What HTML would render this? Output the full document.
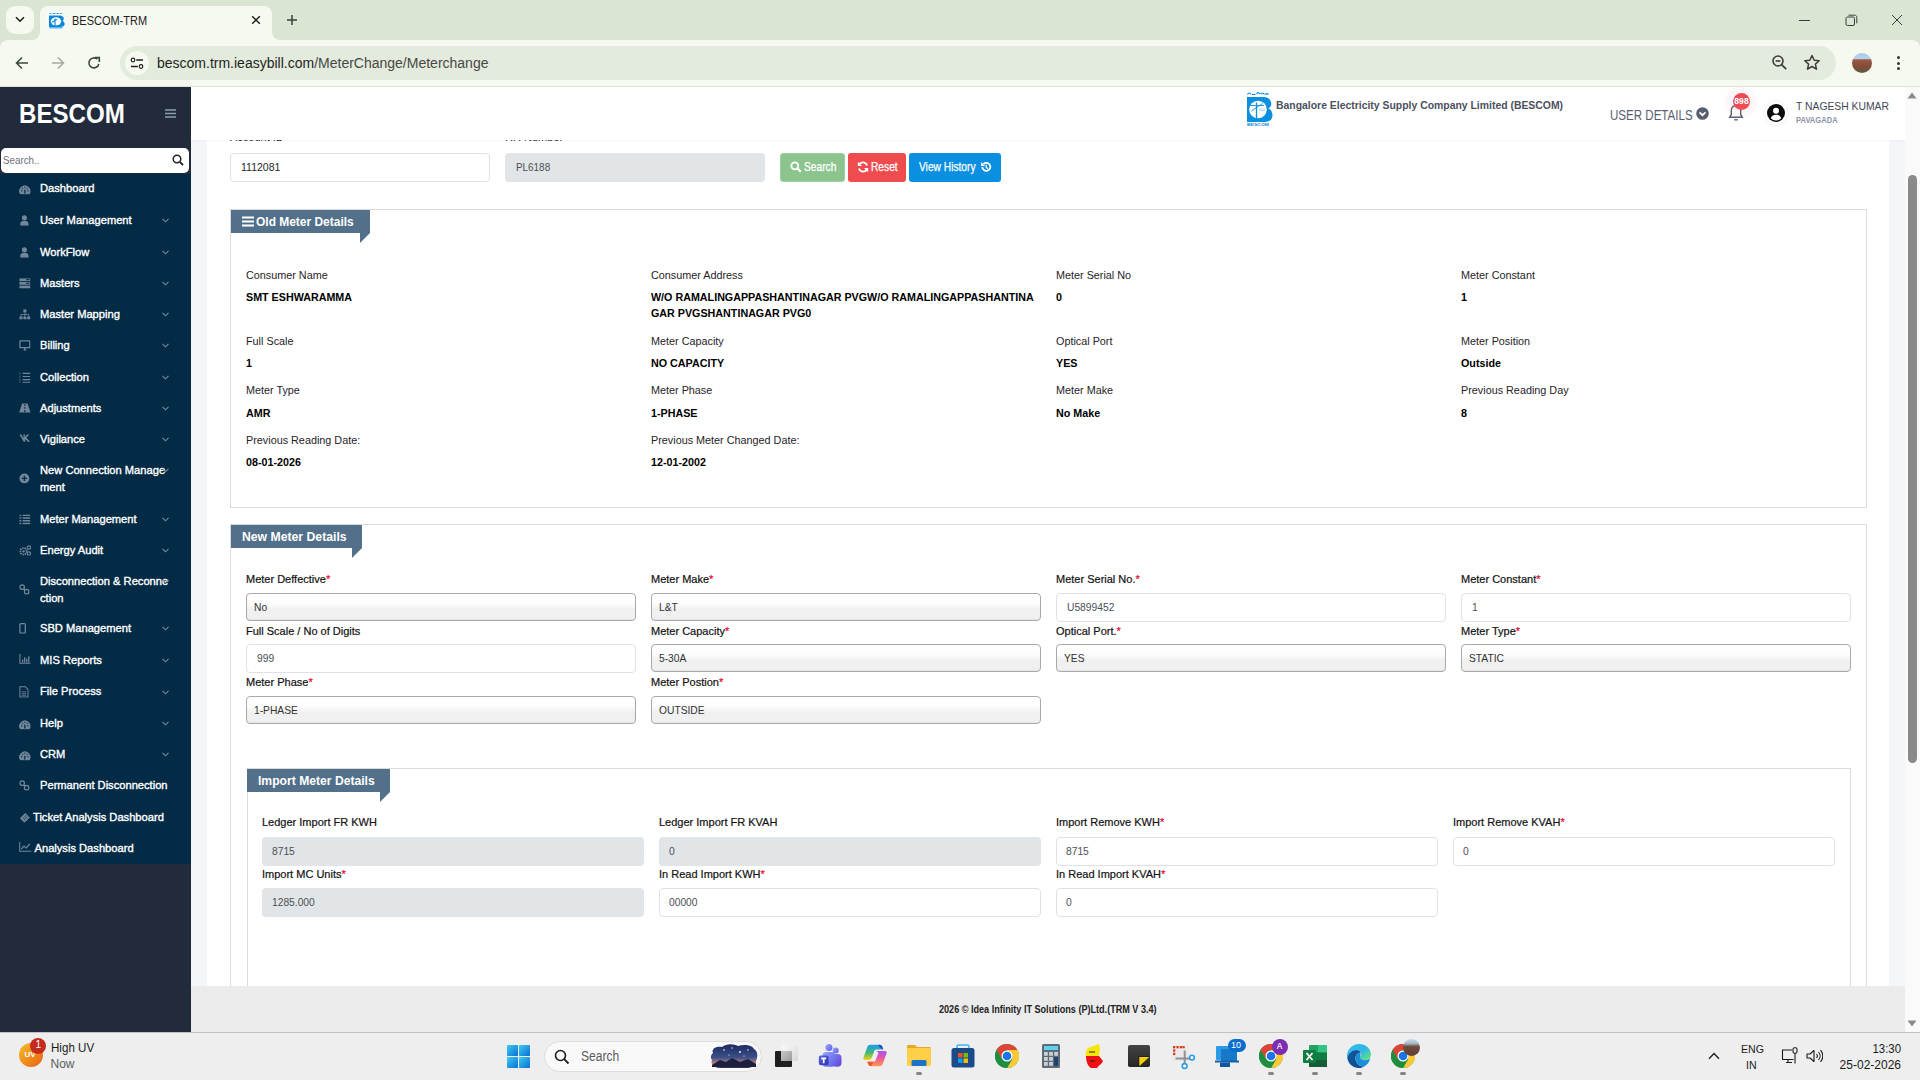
<!DOCTYPE html>
<html><head><meta charset="utf-8"><title>BESCOM-TRM</title>
<style>
*{box-sizing:border-box;margin:0;padding:0}
html,body{width:1920px;height:1080px;overflow:hidden;background:#fff;font-family:"Liberation Sans",sans-serif;position:relative}
.a{position:absolute}
.t{position:absolute;white-space:nowrap;line-height:1}
/* chrome */
#tabbar{left:0;top:0;width:1920px;height:40px;background:#dbe5d3}
#toolbar{left:0;top:40px;width:1920px;height:47px;background:#f6f9ef;border-bottom:1px solid #dce3d6}
/* sidebar */
#side{left:0;top:87px;width:191px;height:945px;background:#222b3b}
#menu{left:0;top:174px;width:191px;height:690px;background:#032b46}
.mi{position:absolute;left:40px;color:#fff;font-size:11.15px;line-height:17px;white-space:nowrap;-webkit-text-stroke:.35px #fff}
.ic{position:absolute;left:19px;width:12px;height:12px}
.chev{position:absolute;left:162px;width:7px;height:5px}
/* header */
#hdr{left:191px;top:87px;width:1714px;height:53px;background:#fff;box-shadow:0 1px 2px rgba(0,0,0,.04)}
/* content */
#bg{left:191px;top:140px;width:1714px;height:846px;background:#f5f6f9}
#card{left:207px;top:140px;width:1682px;height:846px;background:#fff}
#footer{left:191px;top:986px;width:1714px;height:46px;background:#ebebeb}
#sb{left:1905px;top:87px;width:15px;height:945px;background:#fafafa}
/* taskbar */
.sel{border:1px solid #a9a9a9;border-radius:4px;background:linear-gradient(#ffffff 0%,#fdfdfd 35%,#f0f0f0 60%,#f0f0f0 100%);box-shadow:inset 0 -1px 1px rgba(0,0,0,.04)}
#task{left:0;top:1032px;width:1920px;height:48px;background:#eeeeee;border-top:1px solid #c1c1c1}
</style></head><body>
<div id="tabbar" class="a"></div>
<div id="toolbar" class="a"></div>

<!-- tab bar -->
<div class="a" style="left:40px;top:6px;width:232px;height:35px;background:#f6f9ef;border-radius:8px 8px 0 0"></div>
<div class="a" style="left:264px;top:32px;width:16px;height:8px;background:#f6f9ef"></div>
<div class="a" style="left:272px;top:24px;width:16px;height:16px;background:#dbe5d3;border-radius:0 0 0 8px"></div>
<div class="a" style="left:32px;top:32px;width:8px;height:8px;background:#f6f9ef"></div>
<div class="a" style="left:24px;top:24px;width:16px;height:16px;background:#dbe5d3;border-radius:0 0 8px 0"></div>
<div class="a" style="left:6px;top:6px;width:28px;height:28px;background:#f6f9ef;border-radius:9px"></div>
<svg class="a" style="left:15px;top:16px" width="10" height="7" viewBox="0 0 10 7"><path d="M1 1.2 L5 5.2 L9 1.2" stroke="#1f1f1f" stroke-width="1.6" fill="none"/></svg>
<svg class="a" style="left:47px;top:11px" width="18" height="18" viewBox="0 0 18 18"><rect x=".5" y=".5" width="17" height="17.5" fill="#fff" opacity=".6"/><path d="M2.5 2.5h2M5.5 2.5h3M9.5 2.5h2.5M13 2.5h2" stroke="#3aa0e4" stroke-width="1.2"/><path d="M2 4.5H12.5C15.5 4.5 16.8 6 16.8 7.6C16.8 8.6 16.3 9.5 15.6 9.9C17 10.6 17.7 11.8 17.7 13C17.7 15 16 16 13 16H2Z" fill="#0a86dc"/><ellipse cx="9" cy="10.3" rx="5.2" ry="4" fill="#fff"/><path d="M8 7.5V14.5M5 11.2L10 8.3" stroke="#0a86dc" stroke-width="1.1"/><path d="M2.5 16.8h13" stroke="#4aa8e8" stroke-width="1.3"/></svg>
<div class="t" style="left:72px;top:14px;font-size:13px;color:#1f1f1f;transform:scaleX(.845);transform-origin:0 0">BESCOM-TRM</div>
<svg class="a" style="left:251px;top:15px" width="10" height="10" viewBox="0 0 10 10"><path d="M1.2 1.2L8.8 8.8M8.8 1.2L1.2 8.8" stroke="#1f1f1f" stroke-width="1.5"/></svg>
<svg class="a" style="left:286px;top:14px" width="12" height="12" viewBox="0 0 12 12"><path d="M6 1V11M1 6H11" stroke="#3c3f3a" stroke-width="1.5"/></svg>
<!-- window controls -->
<svg class="a" style="left:1799px;top:19px" width="12" height="3" viewBox="0 0 12 3"><path d="M0 1.5H11" stroke="#3d3d3d" stroke-width="1"/></svg>
<svg class="a" style="left:1845px;top:14px" width="13" height="13" viewBox="0 0 13 13"><rect x="1" y="3" width="8.5" height="8.5" rx="1.5" stroke="#3d3d3d" fill="none" stroke-width="1"/><path d="M3.5 1.2H9.5c1.5 0 2.3 .8 2.3 2.3V9.3" stroke="#3d3d3d" fill="none" stroke-width="1"/></svg>
<svg class="a" style="left:1891px;top:14px" width="12" height="12" viewBox="0 0 12 12"><path d="M1 1L11 11M11 1L1 11" stroke="#3d3d3d" stroke-width="1"/></svg>
<!-- toolbar -->
<div class="a" style="left:0;top:40px;width:8px;height:8px;background:#dbe5d3"></div>
<div class="a" style="left:0;top:40px;width:16px;height:16px;background:#f6f9ef;border-radius:8px 0 0 0"></div>
<div class="a" style="left:1912px;top:40px;width:8px;height:8px;background:#dbe5d3"></div>
<div class="a" style="left:1904px;top:40px;width:16px;height:16px;background:#f6f9ef;border-radius:0 8px 0 0"></div>
<svg class="a" style="left:15px;top:56px" width="14" height="14" viewBox="0 0 14 14"><path d="M13 7H2M7 1.5L1.5 7L7 12.5" stroke="#3a4a3a" stroke-width="1.6" fill="none"/></svg>
<svg class="a" style="left:51px;top:56px" width="14" height="14" viewBox="0 0 14 14"><path d="M1 7H12M7 1.5L12.5 7L7 12.5" stroke="#a4aaa2" stroke-width="1.6" fill="none"/></svg>
<svg class="a" style="left:87px;top:56px" width="14" height="14" viewBox="0 0 14 14"><path d="M11.8 8A5 5 0 1 1 10.3 3.2" stroke="#3a4a3a" stroke-width="1.6" fill="none"/><path d="M8 1.6H12.3V5.9" stroke="#3a4a3a" stroke-width="1.6" fill="none"/></svg>
<div class="a" style="left:120px;top:46px;width:1716px;height:34px;background:#e3ebdd;border-radius:17px"></div>
<div class="a" style="left:125px;top:51px;width:24px;height:24px;background:#f6f9ef;border-radius:12px"></div>
<svg class="a" style="left:130px;top:57px" width="14" height="13" viewBox="0 0 14 13"><circle cx="3" cy="3" r="1.8" stroke="#1f1f1f" stroke-width="1.2" fill="none"/><path d="M6.2 3H13M1 9.5H7.8" stroke="#1f1f1f" stroke-width="1.4"/><circle cx="11" cy="9.5" r="1.8" stroke="#1f1f1f" stroke-width="1.2" fill="none"/></svg>
<div class="t" style="left:157px;top:56px;font-size:14px;color:#1f1f1f">bescom.trm.ieasybill.com<span style="color:#474747">/MeterChange/Meterchange</span></div>
<svg class="a" style="left:1771px;top:54px" width="18" height="18" viewBox="0 0 18 18"><circle cx="7" cy="7" r="5" stroke="#3d3d3d" stroke-width="1.6" fill="none"/><path d="M4.6 7H9.4" stroke="#3d3d3d" stroke-width="1.6"/><path d="M10.6 10.6L15.2 15.2" stroke="#3d3d3d" stroke-width="1.8"/></svg>
<svg class="a" style="left:1803px;top:54px" width="18" height="17" viewBox="0 0 18 17"><path d="M9 1.5L11.2 6.3L16.2 6.8L12.4 10.1L13.5 15.2L9 12.5L4.5 15.2L5.6 10.1L1.8 6.8L6.8 6.3Z" stroke="#3d3d3d" stroke-width="1.5" fill="none" stroke-linejoin="round"/></svg>
<div class="a" style="left:1852px;top:53px;width:20px;height:20px;border-radius:10px;background:linear-gradient(#a8c8e8 0%,#b8d4ec 28%,#9a5a44 34%,#8c4a3a 60%,#5a5a3a 100%)"></div>
<div class="a" style="left:1896.5px;top:56px;width:3px;height:3px;border-radius:2px;background:#2d3a2d"></div>
<div class="a" style="left:1896.5px;top:61.5px;width:3px;height:3px;border-radius:2px;background:#2d3a2d"></div>
<div class="a" style="left:1896.5px;top:67px;width:3px;height:3px;border-radius:2px;background:#2d3a2d"></div>
<div id="side" class="a"></div>
<div id="menu" class="a"></div>
<div class="t" style="left:19px;top:100.5px;font-size:27px;font-weight:bold;color:#fff;transform:scaleX(.893);transform-origin:0 0">BESCOM</div>
<svg class="a" style="left:165px;top:109px" width="11" height="9" viewBox="0 0 11 9"><path d="M0 1H11M0 4.5H11M0 8H11" stroke="#8aa0ad" stroke-width="1.6"/></svg>
<div class="a" style="left:1px;top:148px;width:188px;height:25px;background:#fff;border-radius:5px"></div>
<div class="t" style="left:3px;top:155.2px;font-size:11.5px;color:#6b6f78;transform:scaleX(.85);transform-origin:0 0">Search..</div>
<svg class="a" style="left:172px;top:154px" width="12" height="12" viewBox="0 0 12 12"><circle cx="5" cy="5" r="3.8" stroke="#222" stroke-width="1.5" fill="none"/><path d="M7.8 7.8L11 11" stroke="#222" stroke-width="1.8"/></svg>
<div class="mi" style="top:180.3px">Dashboard</div>
<div class="a" style="left:19px;top:184.4px;line-height:0;transform:scale(.9);transform-origin:0 0"><svg width="13" height="12" viewBox="0 0 13 12"><path d="M1.3 11.5A6.3 6.3 0 1 1 11.7 11.5Z" fill="#71869a"/><path d="M6.5 10.5V6.5" stroke="#032b46" stroke-width="1.4"/><circle cx="3" cy="7.5" r=".7" fill="#032b46"/><circle cx="10" cy="7.5" r=".7" fill="#032b46"/><circle cx="4" cy="4.8" r=".7" fill="#032b46"/><circle cx="9" cy="4.8" r=".7" fill="#032b46"/><circle cx="6.5" cy="3.6" r=".7" fill="#032b46"/></svg></div>
<div class="mi" style="top:211.7px">User Management</div>
<div class="a" style="left:19px;top:214.6px;line-height:0;transform:scale(.9);transform-origin:0 0"><svg width="12" height="12" viewBox="0 0 12 12"><circle cx="6" cy="3.2" r="2.8" fill="#71869a"/><path d="M1.5 12v-2.5C1.5 7.5 3 6.6 4.2 6.6h3.6c1.2 0 2.7.9 2.7 2.9V12z" fill="#71869a"/></svg></div>
<svg class="chev" style="top:217.8px" viewBox="0 0 7 5"><path d="M.5 .8L3.5 3.8 6.5 .8" stroke="#7a8c9c" stroke-width="1.1" fill="none"/></svg>
<div class="mi" style="top:243.7px">WorkFlow</div>
<div class="a" style="left:19px;top:246.6px;line-height:0;transform:scale(.9);transform-origin:0 0"><svg width="12" height="12" viewBox="0 0 12 12"><circle cx="6" cy="3.2" r="2.8" fill="#71869a"/><path d="M1.5 12v-2.5C1.5 7.5 3 6.6 4.2 6.6h3.6c1.2 0 2.7.9 2.7 2.9V12z" fill="#71869a"/></svg></div>
<svg class="chev" style="top:249.8px" viewBox="0 0 7 5"><path d="M.5 .8L3.5 3.8 6.5 .8" stroke="#7a8c9c" stroke-width="1.1" fill="none"/></svg>
<div class="mi" style="top:274.8px">Masters</div>
<div class="a" style="left:19px;top:277.7px;line-height:0;transform:scale(.9);transform-origin:0 0"><svg width="13" height="12" viewBox="0 0 13 12"><rect x="0.5" y="0.5" width="12" height="3" fill="#71869a"/><rect x="0.5" y="4.5" width="12" height="3" fill="#71869a"/><rect x="0.5" y="8.5" width="12" height="3" fill="#71869a"/><rect x="8" y="1.2" width="3.5" height="1.2" fill="#032b46"/><rect x="8" y="5.2" width="3.5" height="1.2" fill="#032b46"/></svg></div>
<svg class="chev" style="top:280.9px" viewBox="0 0 7 5"><path d="M.5 .8L3.5 3.8 6.5 .8" stroke="#7a8c9c" stroke-width="1.1" fill="none"/></svg>
<div class="mi" style="top:305.6px">Master Mapping</div>
<div class="a" style="left:19px;top:308.5px;line-height:0;transform:scale(.9);transform-origin:0 0"><svg width="13" height="12" viewBox="0 0 13 12"><rect x="4.8" y="0.5" width="3.4" height="3.2" fill="#71869a"/><rect x="0.5" y="8.3" width="3.4" height="3.2" fill="#71869a"/><rect x="4.8" y="8.3" width="3.4" height="3.2" fill="#71869a"/><rect x="9.1" y="8.3" width="3.4" height="3.2" fill="#71869a"/><path d="M6.5 3.7V8.3M2.2 8.3V6h8.6v2.3" stroke="#71869a" stroke-width="1" fill="none"/></svg></div>
<svg class="chev" style="top:311.7px" viewBox="0 0 7 5"><path d="M.5 .8L3.5 3.8 6.5 .8" stroke="#7a8c9c" stroke-width="1.1" fill="none"/></svg>
<div class="mi" style="top:336.7px">Billing</div>
<div class="a" style="left:19px;top:339.6px;line-height:0;transform:scale(.9);transform-origin:0 0"><svg width="13" height="12" viewBox="0 0 13 12"><rect x="1" y="1" width="11" height="7.5" rx=".5" stroke="#71869a" stroke-width="1.4" fill="none"/><path d="M5 11.2h3M6.5 8.5v2.7" stroke="#71869a" stroke-width="1.5"/></svg></div>
<svg class="chev" style="top:342.8px" viewBox="0 0 7 5"><path d="M.5 .8L3.5 3.8 6.5 .8" stroke="#7a8c9c" stroke-width="1.1" fill="none"/></svg>
<div class="mi" style="top:368.7px">Collection</div>
<div class="a" style="left:19px;top:371.6px;line-height:0;transform:scale(.9);transform-origin:0 0"><svg width="13" height="12" viewBox="0 0 13 12"><path d="M4 1.5h8.5M4 5h8.5M4 8.5h8.5M4 11.5h8.5" stroke="#71869a" stroke-width="1.3"/><path d="M1 .5v2M1 4v2M1 7.5v2M1 10.5v1.5" stroke="#71869a" stroke-width=".8"/></svg></div>
<svg class="chev" style="top:374.8px" viewBox="0 0 7 5"><path d="M.5 .8L3.5 3.8 6.5 .8" stroke="#7a8c9c" stroke-width="1.1" fill="none"/></svg>
<div class="mi" style="top:399.8px">Adjustments</div>
<div class="a" style="left:19px;top:402.7px;line-height:0;transform:scale(.9);transform-origin:0 0"><svg width="13" height="11" viewBox="0 0 13 11"><path d="M3.5 0.5h6l3.3 10h-12.6z" fill="#71869a"/><path d="M6.5 1.5v1.8M6.5 4.5v2M6.5 7.8v2.2" stroke="#032b46" stroke-width="1.2"/></svg></div>
<svg class="chev" style="top:405.9px" viewBox="0 0 7 5"><path d="M.5 .8L3.5 3.8 6.5 .8" stroke="#7a8c9c" stroke-width="1.1" fill="none"/></svg>
<div class="mi" style="top:431.2px">Vigilance</div>
<div class="a" style="left:19px;top:434.1px;line-height:0;transform:scale(.9);transform-origin:0 0"><svg width="13" height="9" viewBox="0 0 13 9"><path d="M0.5 0.5h2.2l2.3 4.5V0.5h2L6 4l3-3.5h2.4L8.2 4.2l4.3 4.3H9.9L7 5.5v3H5.2z" fill="#71869a"/></svg></div>
<svg class="chev" style="top:437.3px" viewBox="0 0 7 5"><path d="M.5 .8L3.5 3.8 6.5 .8" stroke="#7a8c9c" stroke-width="1.1" fill="none"/></svg>
<div class="mi" style="top:462.0px">New Connection Manage<br>ment</div>
<div class="a" style="left:19px;top:472.9px;line-height:0;transform:scale(.9);transform-origin:0 0"><svg width="12" height="12" viewBox="0 0 12 12"><circle cx="6" cy="6" r="5.5" fill="#71869a"/><path d="M6 3v6M3 6h6" stroke="#032b46" stroke-width="1.6"/></svg></div>
<svg class="chev" style="top:468.1px" viewBox="0 0 7 5"><path d="M.5 .8L3.5 3.8 6.5 .8" stroke="#7a8c9c" stroke-width="1.1" fill="none"/></svg>
<div class="mi" style="top:510.6px">Meter Management</div>
<div class="a" style="left:19px;top:513.5px;line-height:0;transform:scale(.9);transform-origin:0 0"><svg width="13" height="12" viewBox="0 0 13 12"><path d="M0.5 1.5h2M0.5 4.5h2M0.5 7.5h2M0.5 10.5h2M4 1.5h8.5M4 4.5h8.5M4 7.5h8.5M4 10.5h8.5" stroke="#71869a" stroke-width="1.6"/></svg></div>
<svg class="chev" style="top:516.7px" viewBox="0 0 7 5"><path d="M.5 .8L3.5 3.8 6.5 .8" stroke="#7a8c9c" stroke-width="1.1" fill="none"/></svg>
<div class="mi" style="top:541.7px">Energy Audit</div>
<div class="a" style="left:19px;top:544.6px;line-height:0;transform:scale(.9);transform-origin:0 0"><svg width="14" height="12" viewBox="0 0 14 12"><circle cx="5" cy="7" r="3.6" stroke="#71869a" stroke-width="2" fill="none" stroke-dasharray="1.6 .9"/><circle cx="5" cy="7" r="1.3" fill="#71869a"/><circle cx="11" cy="2.8" r="1.9" stroke="#71869a" stroke-width="1.3" fill="none"/><circle cx="11" cy="9.5" r="1.9" stroke="#71869a" stroke-width="1.3" fill="none"/></svg></div>
<svg class="chev" style="top:547.8px" viewBox="0 0 7 5"><path d="M.5 .8L3.5 3.8 6.5 .8" stroke="#7a8c9c" stroke-width="1.1" fill="none"/></svg>
<div class="mi" style="top:572.9px">Disconnection &amp; Reconne<br>ction</div>
<div class="a" style="left:19px;top:583.8px;line-height:0;transform:scale(.9);transform-origin:0 0"><svg width="12" height="12" viewBox="0 0 12 12"><circle cx="3.5" cy="3.5" r="2.5" stroke="#71869a" stroke-width="1.4" fill="none"/><circle cx="8.5" cy="8.5" r="2.5" stroke="#71869a" stroke-width="1.4" fill="none"/><path d="M5.2 5.2l1.6 1.6" stroke="#71869a" stroke-width="1.4"/></svg></div>
<svg class="chev" style="top:579.0px" viewBox="0 0 7 5"><path d="M.5 .8L3.5 3.8 6.5 .8" stroke="#7a8c9c" stroke-width="1.1" fill="none"/></svg>
<div class="mi" style="top:620.3px">SBD Management</div>
<div class="a" style="left:19px;top:623.2px;line-height:0;transform:scale(.9);transform-origin:0 0"><svg width="8" height="12" viewBox="0 0 8 12"><rect x="1" y="0.8" width="6" height="10.4" rx="1" stroke="#71869a" stroke-width="1.4" fill="none"/></svg></div>
<svg class="chev" style="top:626.4px" viewBox="0 0 7 5"><path d="M.5 .8L3.5 3.8 6.5 .8" stroke="#7a8c9c" stroke-width="1.1" fill="none"/></svg>
<div class="mi" style="top:651.5px">MIS Reports</div>
<div class="a" style="left:19px;top:654.4px;line-height:0;transform:scale(.9);transform-origin:0 0"><svg width="13" height="11" viewBox="0 0 13 11"><path d="M1 0v10.3h12" stroke="#71869a" stroke-width="1.2" fill="none"/><path d="M4 9.5V6M6.3 9.5V3.5M8.6 9.5V5M10.9 9.5V2.5" stroke="#71869a" stroke-width="1.4"/></svg></div>
<svg class="chev" style="top:657.6px" viewBox="0 0 7 5"><path d="M.5 .8L3.5 3.8 6.5 .8" stroke="#7a8c9c" stroke-width="1.1" fill="none"/></svg>
<div class="mi" style="top:683.4px">File Process</div>
<div class="a" style="left:19px;top:686.3px;line-height:0;transform:scale(.9);transform-origin:0 0"><svg width="11" height="13" viewBox="0 0 11 13"><path d="M1 .8h6l3 3v8.4H1z" stroke="#71869a" stroke-width="1.2" fill="none"/><path d="M3 6.5h5M3 8.5h5M3 10.3h5" stroke="#71869a" stroke-width=".9"/></svg></div>
<svg class="chev" style="top:689.5px" viewBox="0 0 7 5"><path d="M.5 .8L3.5 3.8 6.5 .8" stroke="#7a8c9c" stroke-width="1.1" fill="none"/></svg>
<div class="mi" style="top:714.8px">Help</div>
<div class="a" style="left:19px;top:718.9px;line-height:0;transform:scale(.9);transform-origin:0 0"><svg width="13" height="12" viewBox="0 0 13 12"><path d="M1.3 11.5A6.3 6.3 0 1 1 11.7 11.5Z" fill="#71869a"/><path d="M6.5 10.5V6.5" stroke="#032b46" stroke-width="1.4"/><circle cx="3" cy="7.5" r=".7" fill="#032b46"/><circle cx="10" cy="7.5" r=".7" fill="#032b46"/><circle cx="4" cy="4.8" r=".7" fill="#032b46"/><circle cx="9" cy="4.8" r=".7" fill="#032b46"/><circle cx="6.5" cy="3.6" r=".7" fill="#032b46"/></svg></div>
<svg class="chev" style="top:720.9px" viewBox="0 0 7 5"><path d="M.5 .8L3.5 3.8 6.5 .8" stroke="#7a8c9c" stroke-width="1.1" fill="none"/></svg>
<div class="mi" style="top:745.6px">CRM</div>
<div class="a" style="left:19px;top:749.7px;line-height:0;transform:scale(.9);transform-origin:0 0"><svg width="13" height="12" viewBox="0 0 13 12"><path d="M1.3 11.5A6.3 6.3 0 1 1 11.7 11.5Z" fill="#71869a"/><path d="M6.5 10.5V6.5" stroke="#032b46" stroke-width="1.4"/><circle cx="3" cy="7.5" r=".7" fill="#032b46"/><circle cx="10" cy="7.5" r=".7" fill="#032b46"/><circle cx="4" cy="4.8" r=".7" fill="#032b46"/><circle cx="9" cy="4.8" r=".7" fill="#032b46"/><circle cx="6.5" cy="3.6" r=".7" fill="#032b46"/></svg></div>
<svg class="chev" style="top:751.7px" viewBox="0 0 7 5"><path d="M.5 .8L3.5 3.8 6.5 .8" stroke="#7a8c9c" stroke-width="1.1" fill="none"/></svg>
<div class="mi" style="top:776.7px">Permanent Disconnection</div>
<div class="a" style="left:19px;top:779.6px;line-height:0;transform:scale(.9);transform-origin:0 0"><svg width="12" height="12" viewBox="0 0 12 12"><circle cx="3.5" cy="3.5" r="2.5" stroke="#71869a" stroke-width="1.4" fill="none"/><circle cx="8.5" cy="8.5" r="2.5" stroke="#71869a" stroke-width="1.4" fill="none"/><path d="M5.2 5.2l1.6 1.6" stroke="#71869a" stroke-width="1.4"/></svg></div>
<div class="mi" style="left:33px;top:808.7px">Ticket Analysis Dashboard</div>
<div class="a" style="left:19px;top:811.6px;line-height:0;transform:scale(.9);transform-origin:0 0"><svg width="13" height="12" viewBox="0 0 13 12"><path d="M1 7l6-6 5 5-6 6z" fill="#71869a"/><path d="M4 7.5l4-4M5.5 9l4-4" stroke="#032b46" stroke-width=".8"/></svg></div>
<div class="mi" style="left:34.5px;top:839.5px">Analysis Dashboard</div>
<div class="a" style="left:19px;top:842.4px;line-height:0;transform:scale(.9);transform-origin:0 0"><svg width="14" height="11" viewBox="0 0 14 11"><path d="M.8 0v10.2h13" stroke="#71869a" stroke-width="1.2" fill="none"/><path d="M2.5 8l3-3.5 2.5 2 4-4.5" stroke="#71869a" stroke-width="1.3" fill="none"/></svg></div>
<div id="bg" class="a"></div>
<div id="card" class="a"></div>
<div class="t" style="left:230px;top:131.76px;font-size:11px;color:#212529;">Account ID</div>
<div class="t" style="left:505px;top:131.76px;font-size:11px;color:#212529;">RR Number</div>
<div class="a" style="left:230px;top:153px;width:260px;height:29px;border:1px solid #dee2e6;border-radius:4px;background:#fff"></div>
<div class="t" style="left:241px;top:162.26px;font-size:11px;color:#212529;transform:scaleX(.956);transform-origin:0 0;">1112081</div>
<div class="a" style="left:505px;top:153px;width:260px;height:29px;border-radius:4px;background:#e2e5e8"></div>
<div class="t" style="left:515.5px;top:162.26px;font-size:11px;color:#495057;transform:scaleX(.9);transform-origin:0 0;">PL6188</div>
<div class="a" style="left:780px;top:153px;width:65px;height:29px;border:1px solid #9dd29e;border-radius:3px;background:#8cc48e"></div>
<svg class="a" style="left:790px;top:161px" width="12" height="12" viewBox="0 0 12 12"><circle cx="4.8" cy="4.8" r="3.5" stroke="#fff" stroke-width="1.8" fill="none"/><path d="M7.3 7.3L10.8 10.8" stroke="#fff" stroke-width="2.2"/></svg>
<div class="t" style="left:803.5px;top:160.75px;font-size:12.3px;color:#fff;transform:scaleX(0.83);transform-origin:0 0;-webkit-text-stroke:.25px #fff">Search</div>
<div class="a" style="left:848px;top:153px;width:58px;height:29px;border-radius:3px;background:#ef4c50"></div>
<svg class="a" style="left:857px;top:161px" width="12" height="12" viewBox="0 0 12 12"><path d="M10 4.5A4.3 4.3 0 0 0 2.2 3.5M2 7.5A4.3 4.3 0 0 0 9.8 8.5" stroke="#fff" stroke-width="1.8" fill="none"/><path d="M.8 .8V5H5z M11.2 11.2V7H7z" fill="#fff"/></svg>
<div class="t" style="left:870.5px;top:160.75px;font-size:12.3px;color:#fff;transform:scaleX(0.83);transform-origin:0 0;-webkit-text-stroke:.25px #fff">Reset</div>
<div class="a" style="left:909px;top:153px;width:92px;height:29px;border-radius:3px;background:#0b8fe0"></div>
<div class="t" style="left:919px;top:160.75px;font-size:12.3px;color:#fff;transform:scaleX(0.83);transform-origin:0 0;-webkit-text-stroke:.25px #fff">View History</div>
<svg class="a" style="left:980px;top:161px" width="12" height="12" viewBox="0 0 12 12"><path d="M2.3 6A4 4 0 1 0 3.5 3" stroke="#fff" stroke-width="1.8" fill="none"/><path d="M1 1v4h4z" fill="#fff"/><path d="M6.2 3.8V6.5L8 7.6" stroke="#fff" stroke-width="1.3" fill="none"/></svg>
<div class="a" style="left:230px;top:209px;width:1637px;height:299px;border:1px solid #dadada"></div>
<div class="a" style="left:231px;top:210px;width:139px;height:22.5px;background:#52708a"></div><svg class="a" style="left:360px;top:232.5px" width="10" height="10" viewBox="0 0 10 10"><path d="M0 0H10L0 10Z" fill="#52708a"/></svg>
<svg class="a" style="left:241.5px;top:216px" width="12" height="11" viewBox="0 0 12 11"><path d="M0 1.5H12M0 5.5H12M0 9.5H12" stroke="#fff" stroke-width="2"/></svg>
<div class="t" style="left:256px;top:214.94px;font-size:13px;color:#fff;font-weight:bold;transform:scaleX(0.92);transform-origin:0 0;">Old Meter Details</div>
<div class="t" style="left:246px;top:269.98px;font-size:11.5px;color:#1f2329;transform:scaleX(.94);transform-origin:0 0;">Consumer Name</div>
<div class="t" style="left:246px;top:292.06px;font-size:11px;color:#000;font-weight:bold;transform:scaleX(.975);transform-origin:0 0;">SMT ESHWARAMMA</div>
<div class="t" style="left:651px;top:269.98px;font-size:11.5px;color:#1f2329;transform:scaleX(.94);transform-origin:0 0;">Consumer Address</div>
<div class="t" style="left:651px;top:292.06px;font-size:11px;color:#000;font-weight:bold;transform:scaleX(.975);transform-origin:0 0;">W/O RAMALINGAPPASHANTINAGAR PVGW/O RAMALINGAPPASHANTINA</div>
<div class="t" style="left:1056px;top:269.98px;font-size:11.5px;color:#1f2329;transform:scaleX(.94);transform-origin:0 0;">Meter Serial No</div>
<div class="t" style="left:1056px;top:292.06px;font-size:11px;color:#000;font-weight:bold;transform:scaleX(.975);transform-origin:0 0;">0</div>
<div class="t" style="left:1461px;top:269.98px;font-size:11.5px;color:#1f2329;transform:scaleX(.94);transform-origin:0 0;">Meter Constant</div>
<div class="t" style="left:1461px;top:292.06px;font-size:11px;color:#000;font-weight:bold;transform:scaleX(.975);transform-origin:0 0;">1</div>
<div class="t" style="left:246px;top:335.98px;font-size:11.5px;color:#1f2329;transform:scaleX(.94);transform-origin:0 0;">Full Scale</div>
<div class="t" style="left:246px;top:358.06px;font-size:11px;color:#000;font-weight:bold;transform:scaleX(.975);transform-origin:0 0;">1</div>
<div class="t" style="left:651px;top:335.98px;font-size:11.5px;color:#1f2329;transform:scaleX(.94);transform-origin:0 0;">Meter Capacity</div>
<div class="t" style="left:651px;top:358.06px;font-size:11px;color:#000;font-weight:bold;transform:scaleX(.975);transform-origin:0 0;">NO CAPACITY</div>
<div class="t" style="left:1056px;top:335.98px;font-size:11.5px;color:#1f2329;transform:scaleX(.94);transform-origin:0 0;">Optical Port</div>
<div class="t" style="left:1056px;top:358.06px;font-size:11px;color:#000;font-weight:bold;transform:scaleX(.975);transform-origin:0 0;">YES</div>
<div class="t" style="left:1461px;top:335.98px;font-size:11.5px;color:#1f2329;transform:scaleX(.94);transform-origin:0 0;">Meter Position</div>
<div class="t" style="left:1461px;top:358.06px;font-size:11px;color:#000;font-weight:bold;transform:scaleX(.975);transform-origin:0 0;">Outside</div>
<div class="t" style="left:246px;top:384.98px;font-size:11.5px;color:#1f2329;transform:scaleX(.94);transform-origin:0 0;">Meter Type</div>
<div class="t" style="left:246px;top:408.06px;font-size:11px;color:#000;font-weight:bold;transform:scaleX(.975);transform-origin:0 0;">AMR</div>
<div class="t" style="left:651px;top:384.98px;font-size:11.5px;color:#1f2329;transform:scaleX(.94);transform-origin:0 0;">Meter Phase</div>
<div class="t" style="left:651px;top:408.06px;font-size:11px;color:#000;font-weight:bold;transform:scaleX(.975);transform-origin:0 0;">1-PHASE</div>
<div class="t" style="left:1056px;top:384.98px;font-size:11.5px;color:#1f2329;transform:scaleX(.94);transform-origin:0 0;">Meter Make</div>
<div class="t" style="left:1056px;top:408.06px;font-size:11px;color:#000;font-weight:bold;transform:scaleX(.975);transform-origin:0 0;">No Make</div>
<div class="t" style="left:1461px;top:384.98px;font-size:11.5px;color:#1f2329;transform:scaleX(.94);transform-origin:0 0;">Previous Reading Day</div>
<div class="t" style="left:1461px;top:408.06px;font-size:11px;color:#000;font-weight:bold;transform:scaleX(.975);transform-origin:0 0;">8</div>
<div class="t" style="left:246px;top:435.38px;font-size:11.5px;color:#1f2329;transform:scaleX(.94);transform-origin:0 0;">Previous Reading Date:</div>
<div class="t" style="left:246px;top:457.06px;font-size:11px;color:#000;font-weight:bold;transform:scaleX(.975);transform-origin:0 0;">08-01-2026</div>
<div class="t" style="left:651px;top:435.38px;font-size:11.5px;color:#1f2329;transform:scaleX(.94);transform-origin:0 0;">Previous Meter Changed Date:</div>
<div class="t" style="left:651px;top:457.06px;font-size:11px;color:#000;font-weight:bold;transform:scaleX(.975);transform-origin:0 0;">12-01-2002</div>
<div class="t" style="left:651px;top:308.06px;font-size:11px;color:#000;font-weight:bold;transform:scaleX(.975);transform-origin:0 0;">GAR PVGSHANTINAGAR PVG0</div>
<div class="a" style="left:230px;top:524px;width:1637px;height:467px;border:1px solid #dadada;border-bottom:none"></div>
<div class="a" style="left:231px;top:525px;width:131px;height:23px;background:#52708a"></div><svg class="a" style="left:352px;top:548px" width="10" height="10" viewBox="0 0 10 10"><path d="M0 0H10L0 10Z" fill="#52708a"/></svg>
<div class="t" style="left:242.2px;top:529.64px;font-size:13px;color:#fff;font-weight:bold;transform:scaleX(0.94);transform-origin:0 0;">New Meter Details</div>
<div class="t" style="left:246px;top:574.16px;font-size:11px;color:#111;-webkit-text-stroke:.2px #111;">Meter Deffective<span style="color:#e8002a;-webkit-text-stroke:.2px #e8002a">*</span></div>
<div class="a sel" style="left:246px;top:593px;width:390px;height:28px"></div>
<div class="t" style="left:253.5px;top:601.59px;font-size:10.8px;color:#333;transform:scaleX(.95);transform-origin:0 0;">No</div>
<div class="t" style="left:651px;top:574.16px;font-size:11px;color:#111;-webkit-text-stroke:.2px #111;">Meter Make<span style="color:#e8002a;-webkit-text-stroke:.2px #e8002a">*</span></div>
<div class="a sel" style="left:651px;top:593px;width:390px;height:28px"></div>
<div class="t" style="left:658.5px;top:601.59px;font-size:10.8px;color:#333;transform:scaleX(.95);transform-origin:0 0;">L&amp;T</div>
<div class="t" style="left:1056px;top:574.16px;font-size:11px;color:#111;-webkit-text-stroke:.2px #111;">Meter Serial No.<span style="color:#e8002a;-webkit-text-stroke:.2px #e8002a">*</span></div>
<div class="a" style="left:1056px;top:593px;width:390px;height:29px;background:#fff;border:1px solid #dee2e6;border-radius:4px"></div>
<div class="t" style="left:1066.5px;top:601.59px;font-size:10.8px;color:#495057;transform:scaleX(.95);transform-origin:0 0;">U5899452</div>
<div class="t" style="left:1461px;top:574.16px;font-size:11px;color:#111;-webkit-text-stroke:.2px #111;">Meter Constant<span style="color:#e8002a;-webkit-text-stroke:.2px #e8002a">*</span></div>
<div class="a" style="left:1461px;top:593px;width:390px;height:29px;background:#fff;border:1px solid #dee2e6;border-radius:4px"></div>
<div class="t" style="left:1471.5px;top:601.59px;font-size:10.8px;color:#495057;transform:scaleX(.95);transform-origin:0 0;">1</div>
<div class="t" style="left:246px;top:625.86px;font-size:11px;color:#111;-webkit-text-stroke:.2px #111;">Full Scale / No of Digits</div>
<div class="a" style="left:246px;top:644px;width:390px;height:29px;background:#fff;border:1px solid #dee2e6;border-radius:4px"></div>
<div class="t" style="left:256.5px;top:652.59px;font-size:10.8px;color:#495057;transform:scaleX(.95);transform-origin:0 0;">999</div>
<div class="t" style="left:651px;top:625.86px;font-size:11px;color:#111;-webkit-text-stroke:.2px #111;">Meter Capacity<span style="color:#e8002a;-webkit-text-stroke:.2px #e8002a">*</span></div>
<div class="a sel" style="left:651px;top:644px;width:390px;height:28px"></div>
<div class="t" style="left:658.5px;top:652.59px;font-size:10.8px;color:#333;transform:scaleX(.95);transform-origin:0 0;">5-30A</div>
<div class="t" style="left:1056px;top:625.86px;font-size:11px;color:#111;-webkit-text-stroke:.2px #111;">Optical Port.<span style="color:#e8002a;-webkit-text-stroke:.2px #e8002a">*</span></div>
<div class="a sel" style="left:1056px;top:644px;width:390px;height:28px"></div>
<div class="t" style="left:1063.5px;top:652.59px;font-size:10.8px;color:#333;transform:scaleX(.95);transform-origin:0 0;">YES</div>
<div class="t" style="left:1461px;top:625.86px;font-size:11px;color:#111;-webkit-text-stroke:.2px #111;">Meter Type<span style="color:#e8002a;-webkit-text-stroke:.2px #e8002a">*</span></div>
<div class="a sel" style="left:1461px;top:644px;width:390px;height:28px"></div>
<div class="t" style="left:1468.5px;top:652.59px;font-size:10.8px;color:#333;transform:scaleX(.95);transform-origin:0 0;">STATIC</div>
<div class="t" style="left:246px;top:677.46px;font-size:11px;color:#111;-webkit-text-stroke:.2px #111;">Meter Phase<span style="color:#e8002a;-webkit-text-stroke:.2px #e8002a">*</span></div>
<div class="a sel" style="left:246px;top:696px;width:390px;height:28px"></div>
<div class="t" style="left:253.5px;top:704.59px;font-size:10.8px;color:#333;transform:scaleX(.95);transform-origin:0 0;">1-PHASE</div>
<div class="t" style="left:651px;top:677.46px;font-size:11px;color:#111;-webkit-text-stroke:.2px #111;">Meter Postion<span style="color:#e8002a;-webkit-text-stroke:.2px #e8002a">*</span></div>
<div class="a sel" style="left:651px;top:696px;width:390px;height:28px"></div>
<div class="t" style="left:658.5px;top:704.59px;font-size:10.8px;color:#333;transform:scaleX(.95);transform-origin:0 0;">OUTSIDE</div>
<div class="a" style="left:247px;top:768px;width:1604px;height:223px;border:1px solid #dadada;border-bottom:none"></div>
<div class="a" style="left:247px;top:769px;width:143px;height:23px;background:#52708a"></div><svg class="a" style="left:380px;top:792px" width="10" height="10" viewBox="0 0 10 10"><path d="M0 0H10L0 10Z" fill="#52708a"/></svg>
<div class="t" style="left:258px;top:773.64px;font-size:13px;color:#fff;font-weight:bold;transform:scaleX(0.934);transform-origin:0 0;">Import Meter Details</div>
<div class="t" style="left:262px;top:817.16px;font-size:11px;color:#111;-webkit-text-stroke:.2px #111;">Ledger Import FR KWH</div>
<div class="a" style="left:262px;top:837px;width:382px;height:29px;background:#e2e5e8;border-radius:4px"></div>
<div class="t" style="left:272px;top:845.59px;font-size:10.8px;color:#495057;transform:scaleX(.95);transform-origin:0 0;">8715</div>
<div class="t" style="left:659px;top:817.16px;font-size:11px;color:#111;-webkit-text-stroke:.2px #111;">Ledger Import FR KVAH</div>
<div class="a" style="left:659px;top:837px;width:382px;height:29px;background:#e2e5e8;border-radius:4px"></div>
<div class="t" style="left:669px;top:845.59px;font-size:10.8px;color:#495057;transform:scaleX(.95);transform-origin:0 0;">0</div>
<div class="t" style="left:1056px;top:817.16px;font-size:11px;color:#111;-webkit-text-stroke:.2px #111;">Import Remove KWH<span style="color:#e8002a;-webkit-text-stroke:.2px #e8002a">*</span></div>
<div class="a" style="left:1056px;top:837px;width:382px;height:29px;background:#fff;border:1px solid #dee2e6;border-radius:4px"></div>
<div class="t" style="left:1066px;top:845.59px;font-size:10.8px;color:#495057;transform:scaleX(.95);transform-origin:0 0;">8715</div>
<div class="t" style="left:1453px;top:817.16px;font-size:11px;color:#111;-webkit-text-stroke:.2px #111;">Import Remove KVAH<span style="color:#e8002a;-webkit-text-stroke:.2px #e8002a">*</span></div>
<div class="a" style="left:1453px;top:837px;width:382px;height:29px;background:#fff;border:1px solid #dee2e6;border-radius:4px"></div>
<div class="t" style="left:1463px;top:845.59px;font-size:10.8px;color:#495057;transform:scaleX(.95);transform-origin:0 0;">0</div>
<div class="t" style="left:262px;top:869.16px;font-size:11px;color:#111;-webkit-text-stroke:.2px #111;">Import MC Units<span style="color:#e8002a;-webkit-text-stroke:.2px #e8002a">*</span></div>
<div class="a" style="left:262px;top:888px;width:382px;height:29px;background:#e2e5e8;border-radius:4px"></div>
<div class="t" style="left:272px;top:896.59px;font-size:10.8px;color:#495057;transform:scaleX(.95);transform-origin:0 0;">1285.000</div>
<div class="t" style="left:659px;top:869.16px;font-size:11px;color:#111;-webkit-text-stroke:.2px #111;">In Read Import KWH<span style="color:#e8002a;-webkit-text-stroke:.2px #e8002a">*</span></div>
<div class="a" style="left:659px;top:888px;width:382px;height:29px;background:#fff;border:1px solid #dee2e6;border-radius:4px"></div>
<div class="t" style="left:669px;top:896.59px;font-size:10.8px;color:#495057;transform:scaleX(.95);transform-origin:0 0;">00000</div>
<div class="t" style="left:1056px;top:869.16px;font-size:11px;color:#111;-webkit-text-stroke:.2px #111;">In Read Import KVAH<span style="color:#e8002a;-webkit-text-stroke:.2px #e8002a">*</span></div>
<div class="a" style="left:1056px;top:888px;width:382px;height:29px;background:#fff;border:1px solid #dee2e6;border-radius:4px"></div>
<div class="t" style="left:1066px;top:896.59px;font-size:10.8px;color:#495057;transform:scaleX(.95);transform-origin:0 0;">0</div>
<div id="hdr" class="a"></div>
<div id="footer" class="a"></div>
<div class="t" style="left:939px;top:1004.91px;font-size:10px;color:#222;font-weight:bold;transform:scaleX(.908);transform-origin:0 0;">2026 &copy; Idea Infinity IT Solutions (P)Ltd.(TRM V 3.4)</div>

<div id="sb" class="a"></div>

<!-- header content -->
<svg class="a" style="left:1242px;top:89px" width="36" height="41" viewBox="0 0 36 41"><g fill="#0b8fdf"><path d="M5 8H21.5C26.5 8 29.3 11 29.3 14.8C29.3 17 28.3 18.5 26.3 19.5C29 20.5 30.5 23 30.5 26.3C30.5 30.5 27.5 33 22 33H5Z"/></g><circle cx="16" cy="20.5" r="8.8" fill="#fff"/><path d="M14.5 13.5V29.5" stroke="#0b8fdf" stroke-width="1.3"/><path d="M8 16.5H22M9.5 22L20.5 14.5" stroke="#0b8fdf" stroke-width=".9"/><path d="M17 20H23M17 21.5H23" stroke="#9ccdf0" stroke-width=".7"/><path d="M5.5 5.5c1-2 2.5-2 3.5 0M10 5.5h3.5M14.5 5c1-1.8 2.5-1.8 3.5 0M19 5.5c1-1.8 2.5-1.8 3.5 0M23.5 5.5c.8-1.2 2-1.2 3 0" stroke="#0b8fdf" stroke-width="1.2" fill="none"/><text x="5" y="37" font-family="Liberation Sans" font-weight="bold" font-size="4.2" fill="#0b8fdf" textLength="22" lengthAdjust="spacingAndGlyphs">BESCOM</text></svg>
<div class="t" style="left:1275.5px;top:99.5px;font-size:11.8px;font-weight:bold;color:#4b505e;transform:scaleX(.883);transform-origin:0 0">Bangalore Electricity Supply Company Limited (BESCOM)</div>
<div class="t" style="left:1609.5px;top:107.5px;font-size:14px;color:#585e72;transform:scaleX(.825);transform-origin:0 0">USER DETAILS</div>
<svg class="a" style="left:1696px;top:107px" width="13" height="13" viewBox="0 0 13 13"><circle cx="6.5" cy="6.5" r="6.3" fill="#585e72"/><path d="M3.6 5.4L6.5 8.2 9.4 5.4" stroke="#fff" stroke-width="1.8" fill="none"/></svg>
<div class="a" style="left:1725px;top:87px;width:32px;height:30px;border-radius:16px;background:#fef6f7"></div>
<svg class="a" style="left:1728px;top:104px" width="16" height="18" viewBox="0 0 16 18"><path d="M8 1.5C5 1.5 3.3 3.8 3.3 6.5V10.5L1.5 13.3H14.5L12.7 10.5V6.5C12.7 3.8 11 1.5 8 1.5Z" stroke="#5b6172" stroke-width="1.4" fill="none" stroke-linejoin="round"/><path d="M6.3 15.8h3.4" stroke="#5b6172" stroke-width="1.4"/></svg>
<div class="a" style="left:1733px;top:92.5px;width:17px;height:17px;border-radius:8.5px;background:#ef4c56"></div>
<div class="t" style="left:1741.5px;top:96.8px;font-size:8.6px;font-weight:bold;color:#fff;transform:translateX(-50%)">898</div>
<div class="a" style="left:1763px;top:100px;width:26px;height:26px;border-radius:13px;background:#fff;border:1px solid #eef0f3"></div>
<svg class="a" style="left:1767px;top:104px" width="18" height="18" viewBox="0 0 18 18"><circle cx="9" cy="9" r="9" fill="#0b0b0b"/><circle cx="9" cy="6.8" r="3" fill="#fff"/><path d="M3.8 14.2C4.8 11.8 6.8 10.8 9 10.8S13.2 11.8 14.2 14.2A7.3 7.3 0 0 1 3.8 14.2Z" fill="#fff"/></svg>
<div class="t" style="left:1796px;top:100.5px;font-size:11.5px;color:#424757;transform:scaleX(.9);transform-origin:0 0">T NAGESH KUMAR</div>
<div class="t" style="left:1796px;top:116px;font-size:8.5px;font-weight:bold;color:#8d93ab;transform:scaleX(.89);transform-origin:0 0">PAVAGADA</div>
<!-- scrollbar -->
<svg class="a" style="left:1907px;top:92px" width="10" height="7" viewBox="0 0 10 7"><path d="M5 .5L9.5 6.5H.5Z" fill="#8a8a8a"/></svg>
<div class="a" style="left:1908px;top:175px;width:9px;height:588px;border-radius:4.5px;background:#8a8a8a"></div>
<svg class="a" style="left:1907px;top:1020px" width="10" height="7" viewBox="0 0 10 7"><path d="M.5 .5H9.5L5 6.5Z" fill="#8a8a8a"/></svg>
<div id="task" class="a"></div>
<div class="a" style="left:19px;top:1043px;width:24px;height:24px;border-radius:12px;background:linear-gradient(135deg,#f3bd24 0%,#ef8a1c 55%,#e85d17 100%)"></div>
<div class="t" style="left:24.5px;top:1050.73px;font-size:8px;color:#fff;font-weight:bold;">UV</div>
<div class="a" style="left:30px;top:1037.5px;width:16px;height:16px;border-radius:8px;background:#c42b1c"></div>
<div class="t" style="left:35.5px;top:1039.91px;font-size:10px;color:#fff;">1</div>
<div class="t" style="left:50.5px;top:1042.10px;font-size:12px;color:#1b1b1b;transform:scaleX(0.965);transform-origin:0 0;">High UV</div>
<div class="t" style="left:50.5px;top:1058.10px;font-size:12px;color:#5d5d5d;">Now</div>
<svg class="a" style="left:507px;top:1045px" width="23" height="23" viewBox="0 0 23 23"><defs><linearGradient id="wg" x1="0" y1="0" x2="1" y2="1"><stop offset="0" stop-color="#3ccbf4"/><stop offset="1" stop-color="#0a6fd0"/></linearGradient></defs><rect x="0" y="0" width="11" height="11" rx=".8" fill="url(#wg)"/><rect x="12" y="0" width="11" height="11" rx=".8" fill="url(#wg)"/><rect x="0" y="12" width="11" height="11" rx=".8" fill="url(#wg)"/><rect x="12" y="12" width="11" height="11" rx=".8" fill="url(#wg)"/></svg>
<div class="a" style="left:544px;top:1041px;width:218px;height:31px;border-radius:16px;background:#f9f9f9;border:1px solid #dcdcdc"></div>
<svg class="a" style="left:554px;top:1049px" width="16" height="16" viewBox="0 0 16 16"><circle cx="6.5" cy="6.5" r="5" stroke="#1b1b1b" stroke-width="1.6" fill="none"/><path d="M10.2 10.2L14.5 14.5" stroke="#1b1b1b" stroke-width="1.8"/></svg>
<div class="t" style="left:580.5px;top:1049.28px;font-size:14px;color:#5a5a5a;transform:scaleX(0.86);transform-origin:0 0;">Search</div>
<svg class="a" style="left:710px;top:1043px" width="48" height="26" viewBox="0 0 48 26"><defs><linearGradient id="ng" x1="0" y1="0" x2="0" y2="1"><stop offset="0" stop-color="#1d2a5e"/><stop offset=".55" stop-color="#3a4f8a"/><stop offset=".8" stop-color="#c07a7a"/><stop offset="1" stop-color="#262a4a"/></linearGradient></defs><path d="M3 10C1 6 6 3 12 4C17 0 24 1 28 3C34 1 42 2 44 6C48 8 48 14 46 18C47 23 42 25 36 25H10C4 25 0 21 2 17C0 14 1 12 3 10Z" fill="url(#ng)"/><path d="M2 22L10 17 16 19 22 15 30 19 38 16 46 21V24H2Z" fill="#1b1f3d"/><g fill="#fff"><circle cx="14" cy="7" r=".8"/><circle cx="22" cy="5" r=".7"/><circle cx="30" cy="9" r=".9"/><circle cx="38" cy="7" r=".7"/><circle cx="19" cy="12" r=".6"/><circle cx="34" cy="13" r=".6"/></g></svg>
<div class="a" style="left:781px;top:1045px;width:17px;height:16px;background:linear-gradient(135deg,#fafafa,#d8d8d8);border-radius:1px"></div>
<div class="a" style="left:775px;top:1051px;width:17px;height:16px;background:#1f1f1f;border-radius:1px"></div>
<div class="a" style="left:781px;top:1051px;width:11px;height:10px;background:linear-gradient(135deg,#c8c8c8,#9a9a9a)"></div>
<svg class="a" style="left:818px;top:1044px" width="24" height="23" viewBox="0 0 24 23"><defs><linearGradient id="tg" x1="0" y1="0" x2="1" y2="1"><stop offset="0" stop-color="#9aa4ff"/><stop offset="1" stop-color="#5a5fe0"/></linearGradient><linearGradient id="tg2" x1="0" y1="0" x2="1" y2="1"><stop offset="0" stop-color="#8a7cf8"/><stop offset="1" stop-color="#5b46d8"/></linearGradient><linearGradient id="tg3" x1="0" y1="0" x2="1" y2="1"><stop offset="0" stop-color="#5b63e8"/><stop offset="1" stop-color="#2f33a8"/></linearGradient></defs><circle cx="11" cy="3.6" r="3.5" fill="url(#tg)"/><circle cx="17.7" cy="6.5" r="3" fill="url(#tg)"/><rect x="14" y="10" width="9.5" height="12.8" rx="4" fill="url(#tg2)"/><rect x="4.5" y="8" width="12.5" height="14.8" rx="3.5" fill="url(#tg)"/><rect x="0.8" y="11.5" width="9.8" height="9.8" rx="2.2" fill="url(#tg3)"/><path d="M3.2 14.3H8.2M5.7 14.3V19.3" stroke="#fff" stroke-width="1.7"/></svg>
<svg class="a" style="left:863px;top:1044px" width="24" height="23" viewBox="0 0 24 23"><defs><linearGradient id="cg1" x1="0" y1="0" x2="0" y2="1"><stop offset="0" stop-color="#1e9bf0"/><stop offset=".5" stop-color="#3cb878"/><stop offset="1" stop-color="#f5d312"/></linearGradient><linearGradient id="cg2" x1="0" y1="0" x2="0" y2="1"><stop offset="0" stop-color="#a855f7"/><stop offset=".5" stop-color="#ec5a9a"/><stop offset="1" stop-color="#fb9a4a"/></linearGradient></defs><path d="M7 .8H16.5C18 .8 18.7 1.6 19.4 3L20.3 5.5H13.5C12.3 5.5 11.6 6.2 11.2 7.3L8.5 14.3C8 15.5 7.2 16 6 16H1.8C.6 16 0 15 .4 13.8L4.2 3.2C4.8 1.7 5.6.8 7 .8Z" fill="url(#cg1)"/><path d="M13.5 7H22C23.4 7 24 8 23.6 9.2L19.8 19.8C19.2 21.3 18.4 22.2 17 22.2H7.8C6.5 22.2 5.8 21.4 5.2 20.2L4.3 17.8H10.5C11.7 17.8 12.3 17 12.7 16L15.5 8.8" fill="url(#cg2)"/><path d="M4.3 17.8H10.5L9 21 C8.5 22 7.5 22.2 7 22 C6 21.6 5.4 20.8 4.3 17.8Z" fill="#f05a28"/><path d="M20.3 5.5L19.4 3C18.8 1.6 18 .8 16.5 .8L15 .9C16 1.5 16.5 2.5 17 4Z" fill="#1d4fd8"/></svg>
<svg class="a" style="left:907px;top:1045px" width="24" height="21" viewBox="0 0 24 21"><path d="M0 1.5C0 .6.6 0 1.5 0H8L10 2H22.5C23.4 2 24 2.6 24 3.5V5H0Z" fill="#e8a921"/><rect x="0" y="3" width="24" height="18" rx="1" fill="#ffcf48"/><rect x="4.5" y="15" width="15" height="6" rx="1.5" fill="#1a73c8"/></svg>
<div class="a" style="left:915.5px;top:1072px;width:6px;height:3px;border-radius:1.5px;background:#858585"></div>
<svg class="a" style="left:951px;top:1044px" width="24" height="24" viewBox="0 0 24 24"><path d="M6 5V2.5C6 1.5 6.8 1 7.5 1H16.5C17.2 1 18 1.5 18 2.5V5" stroke="#3bb7ee" stroke-width="1.6" fill="none"/><rect x="0.5" y="4" width="23" height="19.5" rx="2.5" fill="#1c4b8a"/><rect x="7" y="9" width="4.5" height="4.5" fill="#f25022"/><rect x="12.5" y="9" width="4.5" height="4.5" fill="#7fba00"/><rect x="7" y="14.5" width="4.5" height="4.5" fill="#00a4ef"/><rect x="12.5" y="14.5" width="4.5" height="4.5" fill="#ffb900"/></svg>
<svg class="a" style="left:995px;top:1044px" width="24" height="24" viewBox="0 0 24 24"><circle cx="12" cy="12" r="12" fill="#2da44e"/><path d="M12 0A12 12 0 0 1 22.4 6H12Z M12 0A12 12 0 0 0 1.6 6L6.8 15Z" fill="#db4437"/><path d="M1.6 6A12 12 0 0 1 12 0H12V6Z" fill="#db4437"/><path d="M22.4 6A12 12 0 0 1 12 24L17.2 15 12 6Z" fill="#fcc934"/><path d="M6.8 15L1.6 6A12 12 0 0 0 12 24L17.2 15Z" fill="#1e8e3e"/><circle cx="12" cy="12" r="5.5" fill="#fff"/><circle cx="12" cy="12" r="4.3" fill="#1a73e8"/></svg>
<svg class="a" style="left:1042px;top:1044px" width="18" height="24" viewBox="0 0 18 24"><rect x="0" y="0" width="18" height="24" rx="1.5" fill="#5f6a74"/><rect x="2" y="2" width="14" height="4" fill="#5ed0f0"/><g fill="#c9d0d6"><rect x="2" y="8" width="3.8" height="3.8"/><rect x="7.1" y="8" width="3.8" height="3.8"/><rect x="12.2" y="8" width="3.8" height="3.8"/><rect x="2" y="13" width="3.8" height="3.8"/><rect x="7.1" y="13" width="3.8" height="3.8"/><rect x="2" y="18" width="3.8" height="3.8"/><rect x="7.1" y="18" width="3.8" height="3.8"/></g><rect x="12.2" y="13" width="3.8" height="8.8" fill="#1c3f7a"/></svg>
<svg class="a" style="left:1085px;top:1044px" width="19" height="24" viewBox="0 0 19 24"><path d="M3 4L14 0 15 5 14 12H1C0 9 1 6 3 4Z" fill="#f5e60a"/><path d="M1 12H14L18 17C17 20 14 21 12 24H6C3 22 1 18 1 12Z" fill="#ee1111"/><path d="M4 8H10M5 17H10" stroke="#222" stroke-width="1"/></svg>
<svg class="a" style="left:1128px;top:1045px" width="22" height="22" viewBox="0 0 22 22"><defs><linearGradient id="sg" x1="0" y1="0" x2="0" y2="1"><stop offset="0" stop-color="#444"/><stop offset="1" stop-color="#262626"/></linearGradient></defs><rect x="0" y="0" width="22" height="22" rx="1.8" fill="url(#sg)"/><path d="M10.5 11.2H21.8V12L11.2 21.8H10.5Z" fill="#1d1d1d"/><path d="M11.3 12H21.3L11.3 21.3Z" fill="#f8cf0a"/></svg>
<svg class="a" style="left:1171px;top:1044px" width="25" height="26" viewBox="0 0 25 26"><rect x="1" y="1" width="17" height="16" fill="#e6e6e6" opacity=".5"/><g fill="#d83b1f"><rect x="2" y="2" width="2.3" height="2.3"/><rect x="5.4" y="2" width="2.3" height="2.3"/><rect x="8.8" y="2" width="2.3" height="2.3"/><rect x="2" y="5.4" width="2.3" height="2.3"/><rect x="2" y="8.8" width="2.3" height="2.3"/><path d="M11.5 2h1c.8 0 1.3.5 1.3 1.3v1h-2.3z"/></g><path d="M13.7 6.5V15.5Q13.7 14.5 12 14.5H4.5" stroke="#8c9095" stroke-width="2" fill="none"/><path d="M13.7 14.5V21M13.7 14.5H20" stroke="#8c9095" stroke-width="2"/><circle cx="21" cy="13.6" r="2.4" fill="#fff" stroke="#2b9be8" stroke-width="1.6"/><circle cx="13.6" cy="22" r="2.4" fill="#fff" stroke="#2b9be8" stroke-width="1.6"/></svg>
<svg class="a" style="left:1215px;top:1045px" width="24" height="22" viewBox="0 0 24 22"><rect x="1" y="1" width="16" height="14" rx="1" fill="#2a9ae6"/><rect x="6" y="4" width="16" height="13" rx="1" fill="#1a78c8"/><rect x="0" y="15.5" width="24" height="2" fill="#1560a8"/><rect x="5" y="17.5" width="10" height="4.5" fill="#0f56a0"/></svg>
<div class="a" style="left:1227.5px;top:1039px;width:18.5px;height:13px;border-radius:7px;background:#0b6ecf"></div>
<div class="t" style="left:1230.5px;top:1039.99px;font-size:9.5px;color:#fff;transform:scaleX(0.95);transform-origin:0 0;">10</div>
<svg class="a" style="left:1259px;top:1044px" width="24" height="24" viewBox="0 0 24 24"><circle cx="12" cy="12" r="12" fill="#2da44e"/><path d="M12 0A12 12 0 0 1 22.4 6H12Z M12 0A12 12 0 0 0 1.6 6L6.8 15Z" fill="#db4437"/><path d="M1.6 6A12 12 0 0 1 12 0H12V6Z" fill="#db4437"/><path d="M22.4 6A12 12 0 0 1 12 24L17.2 15 12 6Z" fill="#fcc934"/><path d="M6.8 15L1.6 6A12 12 0 0 0 12 24L17.2 15Z" fill="#1e8e3e"/><circle cx="12" cy="12" r="5.5" fill="#fff"/><circle cx="12" cy="12" r="4.3" fill="#1a73e8"/></svg>
<div class="a" style="left:1271.5px;top:1039px;width:16.5px;height:16px;border-radius:8.25px;background:#7b2fb0"></div>
<div class="t" style="left:1276.5px;top:1042.15px;font-size:8.5px;color:#e8d8f5;font-weight:bold;">A</div>
<div class="a" style="left:1268px;top:1072px;width:6px;height:3px;border-radius:1.5px;background:#858585"></div>
<svg class="a" style="left:1303px;top:1045px" width="24" height="22" viewBox="0 0 24 22"><rect x="6" y="0" width="18" height="22" rx="1.2" fill="#21a366"/><rect x="6" y="7.3" width="18" height="7.4" fill="#107c41"/><rect x="6" y="14.7" width="18" height="7.3" fill="#185c37"/><rect x="15" y="0" width="9" height="7.3" fill="#33c481"/><rect x="0" y="5" width="13" height="13" rx="1" fill="#107c41"/><path d="M3.5 8L9.5 15M9.5 8L3.5 15" stroke="#fff" stroke-width="1.8"/></svg>
<div class="a" style="left:1312px;top:1072px;width:6px;height:3px;border-radius:1.5px;background:#858585"></div>
<svg class="a" style="left:1347px;top:1044px" width="24" height="24" viewBox="0 0 24 24"><defs><linearGradient id="eg" x1="0" y1="0" x2="1" y2="1"><stop offset="0" stop-color="#35c1f1"/><stop offset=".5" stop-color="#2fb4e8"/><stop offset="1" stop-color="#66eb6e"/></linearGradient><linearGradient id="eg2" x1="0" y1="0" x2="1" y2="1"><stop offset="0" stop-color="#0c59a4"/><stop offset="1" stop-color="#114a8b"/></linearGradient></defs><path d="M12 0C18.6 0 24 4.8 24 10.5C24 14 21.5 16.2 18 16.2C15 16.2 13 14.8 13 13C13 12 13.8 11.4 14.2 10.6C14.6 8.5 12.8 6 9.5 6C5 6 1.5 9.5 0.3 13.5C.1 12.9 0 12.5 0 12C0 5.4 5.4 0 12 0Z" fill="url(#eg)"/><path d="M0.3 13.5C1.5 9.5 5 6 9.5 6C11.5 6 13 7 13.8 8.5C10.5 8.8 8.5 11.5 8.5 14.5C8.5 19 12.5 23 17.5 22.2C15.8 23.4 14 24 12 24C5.8 24 .8 19.5.3 13.5Z" fill="url(#eg2)"/><path d="M17.5 22.2C12.5 23 8.5 19 8.5 14.5C8.5 11.5 10.5 8.8 13.8 8.5L13 13C13 14.8 15 16.2 18 16.2C20 16.2 22 15.4 23.2 14.2C22.5 17.8 20.5 20.5 17.5 22.2Z" fill="#1b8fd8"/></svg>
<div class="a" style="left:1356px;top:1072px;width:6px;height:3px;border-radius:1.5px;background:#858585"></div>
<svg class="a" style="left:1391px;top:1044px" width="24" height="24" viewBox="0 0 24 24"><circle cx="12" cy="12" r="12" fill="#2da44e"/><path d="M12 0A12 12 0 0 1 22.4 6H12Z M12 0A12 12 0 0 0 1.6 6L6.8 15Z" fill="#db4437"/><path d="M1.6 6A12 12 0 0 1 12 0H12V6Z" fill="#db4437"/><path d="M22.4 6A12 12 0 0 1 12 24L17.2 15 12 6Z" fill="#fcc934"/><path d="M6.8 15L1.6 6A12 12 0 0 0 12 24L17.2 15Z" fill="#1e8e3e"/><circle cx="12" cy="12" r="5.5" fill="#fff"/><circle cx="12" cy="12" r="4.3" fill="#1a73e8"/></svg>
<div class="a" style="left:1403px;top:1039px;width:17px;height:17px;border-radius:8.5px;background:linear-gradient(#c9dcea 0%,#a9bccb 25%,#6f4a3c 45%,#5b4034 100%)"></div>
<div class="a" style="left:1400px;top:1072px;width:6px;height:3px;border-radius:1.5px;background:#858585"></div>
<svg class="a" style="left:1708px;top:1052px" width="12" height="8" viewBox="0 0 12 8"><path d="M1 6.8L6 1.5 11 6.8" stroke="#1b1b1b" stroke-width="1.3" fill="none"/></svg>
<div class="t" style="left:1740.5px;top:1043.98px;font-size:11.5px;color:#1b1b1b;transform:scaleX(0.92);transform-origin:0 0;">ENG</div>
<div class="t" style="left:1746px;top:1059.98px;font-size:11.5px;color:#1b1b1b;transform:scaleX(0.92);transform-origin:0 0;">IN</div>
<svg class="a" style="left:1781px;top:1047px" width="18" height="17" viewBox="0 0 18 17"><path d="M11 3H1.5V12.5H12.5" stroke="#1b1b1b" stroke-width="1.1" fill="none"/><path d="M5 15.5H11M7 12.5V15.5" stroke="#1b1b1b" stroke-width="1.1"/><rect x="12" y=".8" width="4" height="5.5" rx="1.5" stroke="#1b1b1b" stroke-width="1.1" fill="none"/><path d="M14 6.3V16.5" stroke="#1b1b1b" stroke-width="1.1"/></svg>
<svg class="a" style="left:1806px;top:1049px" width="17" height="14" viewBox="0 0 17 14"><path d="M1 5H4L8 1.5V12.5L4 9H1Z" stroke="#1b1b1b" stroke-width="1.1" fill="none" stroke-linejoin="round"/><path d="M10.5 5A3 3 0 0 1 10.5 9M12.5 3A6 6 0 0 1 12.5 11M14.5 1.2A8.5 8.5 0 0 1 14.5 12.8" stroke="#1b1b1b" stroke-width="1.1" fill="none"/></svg>
<div class="t" style="right:19px;top:1042.90px;font-size:12px;color:#1b1b1b;transform:scaleX(.95);transform-origin:100% 0">13:30</div>
<div class="t" style="right:19px;top:1058.70px;font-size:12px;color:#1b1b1b;transform-origin:100% 0">25-02-2026</div>
</body></html>
